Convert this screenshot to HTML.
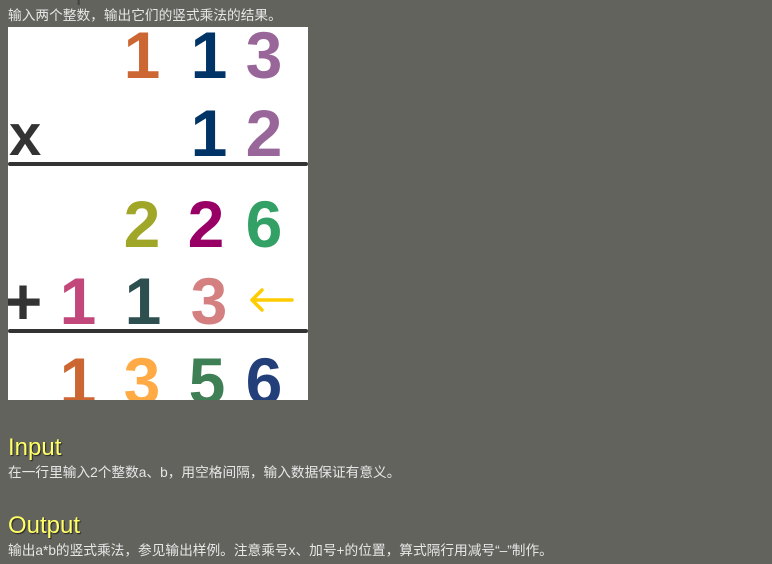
<!DOCTYPE html>
<html><head><meta charset="utf-8"><style>
body{margin:0;width:772px;height:564px;background:#63635e;overflow:hidden;position:relative;font-family:"Liberation Sans","Noto Sans CJK SC",sans-serif}
.t{position:absolute;left:8px;font-size:13.7px;color:#e6e6e6;white-space:nowrap;line-height:16px}
.h{position:absolute;left:8px;font-size:24px;color:#ffff66;text-shadow:1px 1px 1px #222;line-height:26px}
#img{position:absolute;left:8px;top:27px;width:300px;height:373px;background:#fff;overflow:hidden}
.d{position:absolute;width:40px;text-align:center;font-weight:bold;font-size:66px;line-height:66px;font-family:"Liberation Sans",Arial,sans-serif}
.ln{position:absolute;left:0;width:300px;height:4px;background:#333;border-radius:2px}
</style></head><body>
<div class="h" style="top:-20px;color:#444;text-shadow:none">Description</div>
<div class="t" style="top:8px">输入两个整数，输出它们的竖式乘法的结果。</div>
<div id="img">
<div class="d" style="left:114px;top:-5px;color:#cc6633">1</div>
<div class="d" style="left:181px;top:-5px;color:#003366">1</div>
<div class="d" style="left:236px;top:-5px;color:#996699">3</div>
<div class="d" style="left:1px;top:76px;color:#333;width:32px;font-size:58px">x</div>
<div class="d" style="left:181px;top:73px;color:#003366">1</div>
<div class="d" style="left:236px;top:73px;color:#996699">2</div>
<div class="ln" style="top:135px"></div>
<div class="d" style="left:114px;top:164px;color:#a0a628">2</div>
<div class="d" style="left:178px;top:164px;color:#990066">2</div>
<div class="d" style="left:236px;top:164px;color:#33a066">6</div>
<div class="d" style="left:-5px;top:241px;color:#333">+</div>
<div class="d" style="left:50px;top:241px;color:#c2477a">1</div>
<div class="d" style="left:115px;top:241px;color:#2e4f4f">1</div>
<div class="d" style="left:181px;top:241px;color:#d47f80">3</div>
<svg style="position:absolute;left:240px;top:258px" width="50" height="30" viewBox="0 0 50 30"><path d="M4 15H44M14 5L4 15L14 25" stroke="#ffcc00" stroke-width="3.5" fill="none" stroke-linecap="round" stroke-linejoin="round"/></svg>
<div class="ln" style="top:302px"></div>
<div class="d" style="left:50px;top:321px;color:#cc6633">1</div>
<div class="d" style="left:114px;top:321px;color:#ffaa44">3</div>
<div class="d" style="left:179px;top:321px;color:#3f7f55">5</div>
<div class="d" style="left:236px;top:321px;color:#233f7a">6</div>
</div>
<div class="h" style="top:435px">Input</div>
<div class="t" style="top:465px">在一行里输入2个整数a、b，用空格间隔，输入数据保证有意义。</div>
<div class="h" style="top:513px">Output</div>
<div class="t" style="top:543px">输出a*b的竖式乘法，参见输出样例。注意乘号x、加号+的位置，算式隔行用减号“–”制作。</div>
</body></html>
